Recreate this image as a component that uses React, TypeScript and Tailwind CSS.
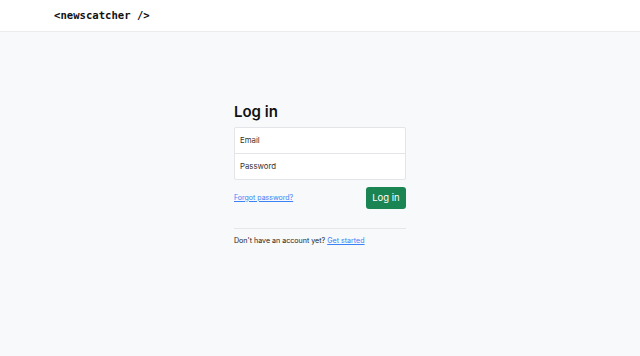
export default function App() {
  return (
    <div className="min-h-[356px] bg-[#f8f9fa] font-['Inter',sans-serif] text-[#111]">
      <header className="h-[32px] bg-white border-b border-[#ececec] flex items-center px-[54px]">
        <span className="font-['DejaVu_Sans_Mono',monospace] font-bold text-[10.6px] text-[#111]">
          &lt;newscatcher /&gt;
        </span>
      </header>
      <div className="flex justify-center pt-[71px]">
        <div className="w-[172px]">
          <h1 className="text-[15px] font-semibold leading-[18px] mb-[6px]">Log in</h1>
          <div className="bg-white border border-[#e3e5e8] rounded-[2px]">
            <div className="h-[26px] flex items-center px-[5px] text-[7.8px] text-[#333] border-b border-[#e3e5e8]">Email</div>
            <div className="h-[25px] flex items-center px-[5px] text-[7.8px] text-[#333]">Password</div>
          </div>
          <div className="flex items-center justify-between mt-[7px]">
            <a className="text-[7px] text-[#3b82f6] underline">Forgot password?</a>
            <button className="h-[22px] w-[40px] rounded-[3px] bg-[#1a8453] text-white text-[9.5px]">Log in</button>
          </div>
          <div className="border-t border-[#e6e7e9] mt-[19px] pt-[7px] text-[7.1px] text-[#222]">
            Don't have an account yet? <a className="text-[#3b82f6] underline">Get started</a>
          </div>
        </div>
      </div>
    </div>
  );
}
